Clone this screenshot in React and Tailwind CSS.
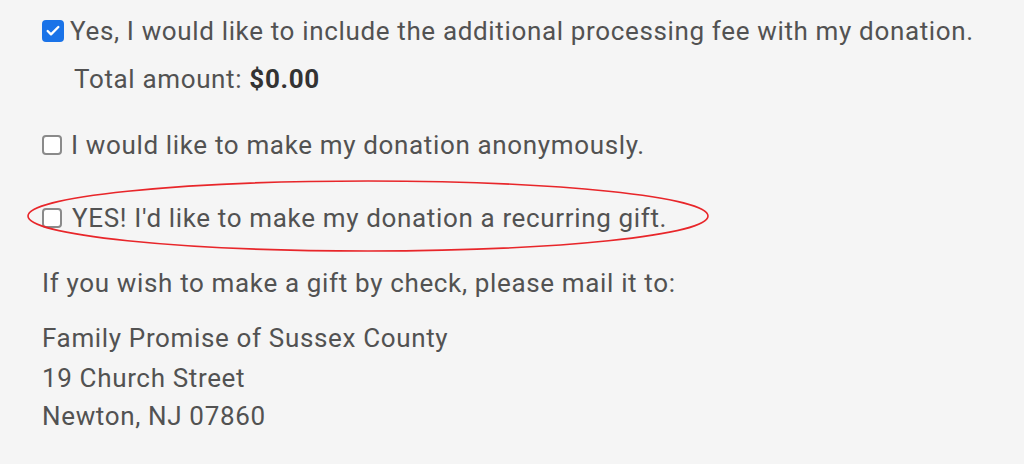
import { Check } from "lucide-react";

function Box({ checked = false }) {
  if (checked) {
    return (
      <span className="inline-flex h-[22px] w-[22px] shrink-0 items-center justify-center rounded-[4px] bg-[#1a73e8]">
        <Check className="h-[16px] w-[16px] text-white" strokeWidth={3.5} />
      </span>
    );
  }
  return <span className="inline-block h-[20px] w-[20px] shrink-0 rounded-[4px] border-2 border-[#8a8a8a] bg-white" />;
}

export default function App() {
  return (
    <div
      className="relative h-[464px] w-[1024px] overflow-hidden bg-[#f5f5f5] pl-[42px] pt-[12px] text-[26px] leading-[38px] tracking-[0.65px] text-[#525252]"
      style={{ fontFamily: "Roboto, 'Liberation Sans', sans-serif" }}
    >
      <div className="flex items-center gap-[6px]">
        <Box checked />
        <span>Yes, I would like to include the additional processing fee with my donation.</span>
      </div>
      <div className="mt-[10px] pl-[32px]">
        Total amount: <span className="font-bold text-[#333]">$0.00</span>
      </div>

      <div className="mt-[28px] flex items-center gap-[9px]">
        <Box />
        <span>I would like to make my donation anonymously.</span>
      </div>

      <div className="mt-[35px] flex items-center gap-[10px]">
        <Box />
        <span>YES! I'd like to make my donation a recurring gift.</span>
      </div>

      <p className="mt-[27px]">If you wish to make a gift by check, please mail it to:</p>

      <div className="mt-[17px] leading-[39px]">
        <div>Family Promise of Sussex County</div>
        <div className="mt-[1px]">19 Church Street</div>
        <div className="-mt-[1px]">Newton, NJ 07860</div>
      </div>

      <svg className="pointer-events-none absolute left-[24px] top-[178px]" width="690" height="78" viewBox="0 0 690 78">
        <ellipse cx="344" cy="38" rx="340" ry="35" fill="none" stroke="#e8262a" strokeWidth="1.6" />
      </svg>
    </div>
  );
}
